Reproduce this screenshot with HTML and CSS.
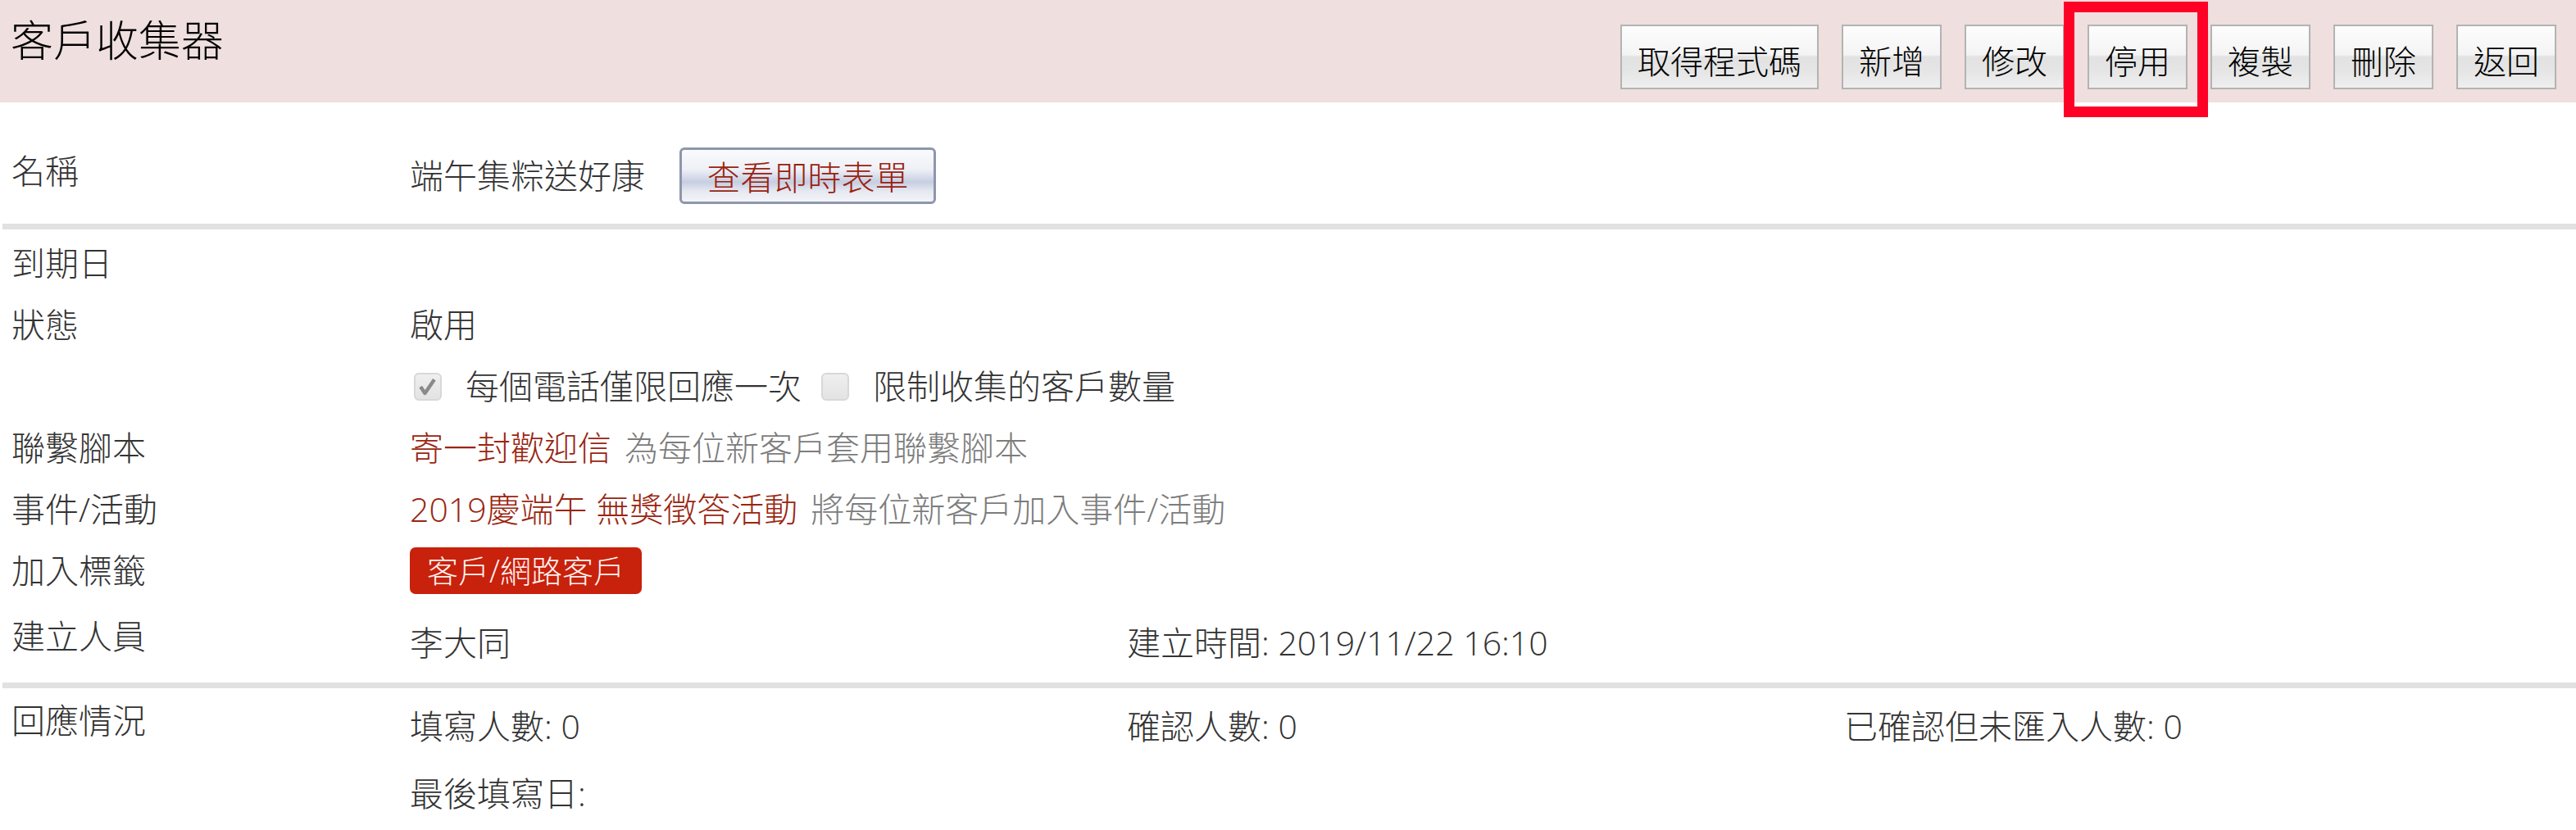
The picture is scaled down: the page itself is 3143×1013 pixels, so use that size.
FILE: index.html
```html
<!DOCTYPE html>
<html lang="zh-Hant">
<head>
<meta charset="utf-8">
<title>客戶收集器</title>
<link rel="stylesheet" href="styles.css">
</head>
<body>
<div class="page">
  <header class="topbar">
    <h1 class="title">客戶收集器</h1>
    <div class="actions">
      <button class="btn">取得程式碼</button>
      <button class="btn">新增</button>
      <button class="btn">修改</button>
      <span class="btn-wrap"><button class="btn">停用</button><span class="highlight"></span></span>
      <button class="btn">複製</button>
      <button class="btn">刪除</button>
      <button class="btn">返回</button>
    </div>
  </header>

  <section class="sec sec-name">
    <div class="row row-name">
      <div class="label">名稱</div>
      <div class="value">端午集粽送好康<button class="form-btn">查看即時表單</button></div>
    </div>
  </section>

  <div class="sep"></div>

  <section class="sec sec-main">
    <div class="row">
      <div class="label">到期日</div>
      <div class="value"></div>
    </div>
    <div class="row">
      <div class="label">狀態</div>
      <div class="value">啟用</div>
    </div>
    <div class="row">
      <div class="label"></div>
      <div class="value">
        <span class="cb cb-first"><svg viewBox="0 0 34 34" width="30" height="30"><path d="M7 17 L13 26 L26 7" fill="none" stroke="#8a8a8a" stroke-width="5" stroke-linejoin="round"/></svg></span>
        <span class="cb-text">每個電話僅限回應一次</span>
        <span class="cb cb-second"></span>
        <span class="cb-text">限制收集的客戶數量</span>
      </div>
    </div>
    <div class="row">
      <div class="label">聯繫腳本</div>
      <div class="value"><span class="link">寄一封歡迎信</span><span class="hint">為每位新客戶套用聯繫腳本</span></div>
    </div>
    <div class="row">
      <div class="label">事件/活動</div>
      <div class="value"><span class="link">2019慶端午 無獎徵答活動</span><span class="hint">將每位新客戶加入事件/活動</span></div>
    </div>
    <div class="row">
      <div class="label">加入標籤</div>
      <div class="value"><span class="tag">客戶/網路客戶</span></div>
    </div>
    <div class="row row-top row-creator">
      <div class="label">建立人員</div>
      <div class="grid">
        <div>李大同</div>
        <div>建立時間: 2019/11/22 16:10</div>
      </div>
    </div>
  </section>

  <div class="sep sep-bottom"></div>

  <section class="sec sec-stats">
    <div class="row row-top">
      <div class="label">回應情況</div>
      <div class="grid">
        <div>填寫人數: 0</div>
        <div>確認人數: 0</div>
        <div>已確認但未匯入人數: 0</div>
        <div>最後填寫日:</div>
      </div>
    </div>
  </section>
</div>
</body>
</html>
```

FILE: styles.css
```css
body {
  margin: 0;
  background: #ffffff;
  color: #333333;
  font-family: "Open Sans", "Noto Sans CJK TC", "Noto Sans CJK SC", sans-serif;
  font-weight: 300;
}

.page {
  width: 100%;
}

/* ---------- top bar ---------- */
.topbar {
  display: flex;
  justify-content: space-between;
  align-items: flex-start;
  height: 125px;
  box-sizing: border-box;
  padding: 0 24px 0 13px;
  background: #efdfdf;
}

.title {
  margin: 21px 0 0;
  font-family: "Noto Sans CJK TC", "Noto Sans CJK SC", sans-serif;
  font-size: 52px;
  line-height: 52px;
  font-weight: 300;
  color: #000000;
}

.actions {
  display: flex;
  gap: 28px;
  margin-top: 30px;
}

.btn {
  height: 79px;
  box-sizing: border-box;
  padding: 6px 19px 0;
  border: 2px solid #b3b3b3;
  border-radius: 0;
  background: linear-gradient(#fdfdfd 0%, #f4f4f4 46%, #e2e2e2 50%, #e5e5e5 72%, #efefef 100%);
  color: #000000;
  font-family: "Noto Sans CJK TC", "Noto Sans CJK SC", sans-serif;
  font-size: 40px;
  font-weight: 300;
  line-height: 1;
  white-space: nowrap;
}

.btn-wrap {
  position: relative;
  display: flex;
}

.highlight {
  position: absolute;
  left: -29px;
  top: -28px;
  width: 176px;
  height: 141px;
  box-sizing: border-box;
  border: 13px solid #ff0026;
  pointer-events: none;
}

/* ---------- sections ---------- */
.sec {
  padding-left: 14px;
}

.sec-name {
  padding-top: 55px;
}

.sec-main {
  padding-top: 4px;
}

.row {
  display: flex;
  align-items: center;
  height: 75px;
}

.row-name {
  height: 69px;
}

.row-name .label {
  align-self: flex-start;
  margin-top: 8px;
}

.label {
  flex: none;
  width: 486px;
  font-size: 41px;
  line-height: 41px;
}

.value {
  display: flex;
  align-items: center;
  font-size: 41px;
  line-height: 41px;
  white-space: nowrap;
}

.form-btn {
  margin-left: 42px;
  width: 313px;
  height: 69px;
  box-sizing: border-box;
  padding: 0;
  border: 3px solid #8e96ac;
  border-radius: 6px;
  background: linear-gradient(#fafbfd 0%, #eef0f6 38%, #c6cee1 62%, #e6e9f1 80%, #f3f4f8 100%);
  color: #9a2210;
  font-family: "Noto Sans CJK TC", "Noto Sans CJK SC", sans-serif;
  font-size: 41px;
  font-weight: 300;
  line-height: 1;
}

.sep {
  height: 7px;
  margin: 24px 0 0 3px;
  background: #e1e1e1;
}

.sep-bottom {
  margin-top: 28px;
}

/* checkboxes */
.cb {
  display: inline-flex;
  align-items: center;
  justify-content: center;
  width: 34px;
  height: 34px;
  box-sizing: border-box;
  border: 2px solid #d8d8d8;
  border-radius: 6px;
  background: linear-gradient(#efefef, #e3e3e3);
}

.cb-first {
  margin-left: 5px;
}

.cb-second {
  margin-left: 24px;
}

.cb-text {
  margin-left: 29px;
}

.link {
  color: #9a2510;
}

.hint {
  margin-left: 16px;
  color: #7c7c7c;
}

.tag {
  display: inline-block;
  height: 57px;
  line-height: 57px;
  padding: 0 21px;
  border-radius: 7px;
  background: #c8210c;
  color: #fff2ef;
  font-size: 38px;
}

/* rows with grids of values */
.row-top {
  align-items: flex-start;
  height: auto;
}

.row-creator .label {
  margin-top: 22px;
}

.row-creator .grid {
  margin-top: 30px;
}

.grid {
  display: grid;
  grid-template-columns: 875px 875px auto;
  row-gap: 41px;
  font-size: 41px;
  line-height: 41px;
  white-space: nowrap;
}

.sec-stats .label {
  margin-top: 19px;
}

.sec-stats .grid {
  margin-top: 26px;
}
```
